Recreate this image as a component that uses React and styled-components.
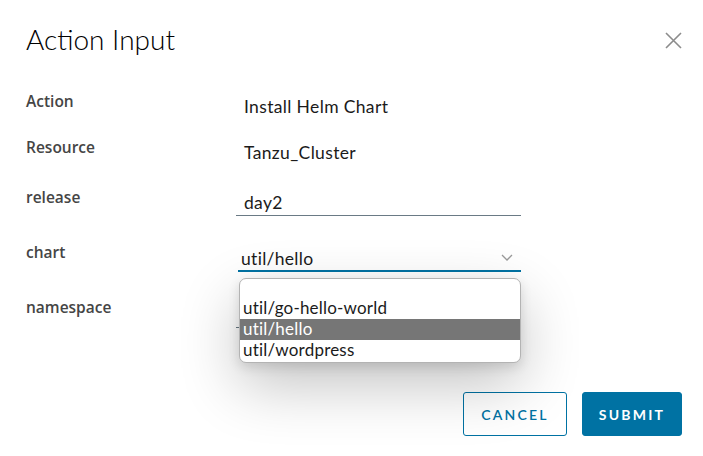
import React from "react";
import styled, { createGlobalStyle } from "styled-components";

const Global = createGlobalStyle`
  html, body { margin: 0; padding: 0; background: #fff; }
  body { width: 703px; height: 456px; overflow: hidden; }
  * { box-sizing: border-box; }
`;

const Modal = styled.div`
  width: 703px;
  height: 456px;
  padding: 0 21px 0 26px;
  display: flex;
  flex-direction: column;
  font-family: "Lato", "Noto Sans", sans-serif;
`;

const Header = styled.div`
  display: flex;
  justify-content: space-between;
  align-items: flex-start;
  height: 92px;
  padding-top: 20px;
`;

const Title = styled.h3`
  margin: 0;
  font-family: "Lato", sans-serif;
  font-weight: 300;
  font-size: 28px;
  line-height: 38px;
  color: #000;
`;

const Close = styled.button`
  border: 0;
  background: none;
  padding: 0;
  margin: 11px 0 0 0;
  width: 18px;
  height: 18px;
  display: flex;
  align-items: center;
  justify-content: center;
  cursor: pointer;
`;

const Form = styled.div`
  display: flex;
  flex-direction: column;
`;

const Row = styled.div`
  display: grid;
  grid-template-columns: 210px 285px;
  height: ${(p) => p.$h}px;
`;

const Label = styled.div`
  margin-top: -1px;
  font-family: "Open Sans", "Noto Sans", sans-serif;
  font-weight: 600;
  font-size: 15.5px;
  line-height: 20px;
  color: #454545;
`;

const Value = styled.div`
  padding: 5px 0 0 8px;
  font-size: 17.5px;
  letter-spacing: 0.35px;
  line-height: 20px;
  color: #1b1b1b;
`;

const Input = styled.div`
  position: relative;
  height: 24px;
  margin-top: ${(p) => p.$mt || 0}px;
  margin-left: ${(p) => p.$ml || 0}px;
  border-bottom: ${(p) => (p.$focus ? "2px solid #0072a3" : "1px solid #6a7a85")};
  padding-left: ${(p) => p.$pl || 8}px;
  font-size: 17.5px;
  letter-spacing: 0.3px;
  line-height: 22px;
  color: #1b1b1b;
`;

const Chevron = styled.svg`
  position: absolute;
  right: 8px;
  top: 6px;
`;

const Menu = styled.div`
  position: absolute;
  left: 1px;
  right: 0;
  top: 30px;
  z-index: 5;
  background: #fff;
  border: 1px solid #b3b3b3;
  border-radius: 7px;
  padding: 0 0 1px;
  box-shadow: 0 22px 60px rgba(0, 0, 0, 0.24), 0 4px 12px rgba(0, 0, 0, 0.12);
  overflow: hidden;
`;

const Option = styled.div`
  height: ${(p) => (p.$empty ? 19 : 21)}px;
  padding-left: 3px;
  font-size: 17px;
  letter-spacing: 0.2px;
  line-height: 20px;
  color: ${(p) => (p.$selected ? "#fff" : "#1b1b1b")};
  background: ${(p) => (p.$selected ? "#767676" : "transparent")};
`;

const Footer = styled.div`
  display: flex;
  justify-content: flex-end;
  gap: 15px;
  margin-top: 54px;
`;

const Button = styled.button`
  height: 44px;
  padding: 0;
  width: ${(p) => p.$w}px;
  border-radius: 3px;
  border: 1px solid #0072a3;
  background: ${(p) => (p.$primary ? "#0072a3" : "#fff")};
  color: ${(p) => (p.$primary ? "#fff" : "#0072a3")};
  font-family: "Lato", sans-serif;
  font-weight: ${(p) => (p.$primary ? 700 : 600)};
  font-size: 14px;
  letter-spacing: 2.2px;
  text-transform: uppercase;
  cursor: pointer;
`;

export default function App() {
  return (
    <>
      <Global />
      <Modal>
        <Header>
          <Title>Action Input</Title>
          <Close aria-label="close">
            <svg width="17" height="17" viewBox="0 0 17 17">
              <path d="M1 1L16 16M16 1L1 16" stroke="#8c8c8c" strokeWidth="1.6" fill="none" />
            </svg>
          </Close>
        </Header>
        <Form>
          <Row $h={46}>
            <Label>Action</Label>
            <Value>Install Helm Chart</Value>
          </Row>
          <Row $h={50}>
            <Label>Resource</Label>
            <Value>Tanzu_Cluster</Value>
          </Row>
          <Row $h={55}>
            <Label>release</Label>
            <Input $mt={4}>day2</Input>
          </Row>
          <Row $h={55}>
            <Label>chart</Label>
            <Input $mt={5} $ml={2} $pl={3} $focus>
              util/hello
              <Chevron width="12" height="7" viewBox="0 0 12 7">
                <path d="M1 1L6 6L11 1" stroke="#9a9a9a" strokeWidth="1.3" fill="none" />
              </Chevron>
              <Menu>
                <Option $empty />
                <Option>util/go-hello-world</Option>
                <Option $selected>util/hello</Option>
                <Option>util/wordpress</Option>
              </Menu>
            </Input>
          </Row>
          <Row $h={40}>
            <Label>namespace</Label>
            <Input $mt={6} />
          </Row>
        </Form>
        <Footer>
          <Button $w={104}>Cancel</Button>
          <Button $w={100} $primary>Submit</Button>
        </Footer>
      </Modal>
    </>
  );
}
